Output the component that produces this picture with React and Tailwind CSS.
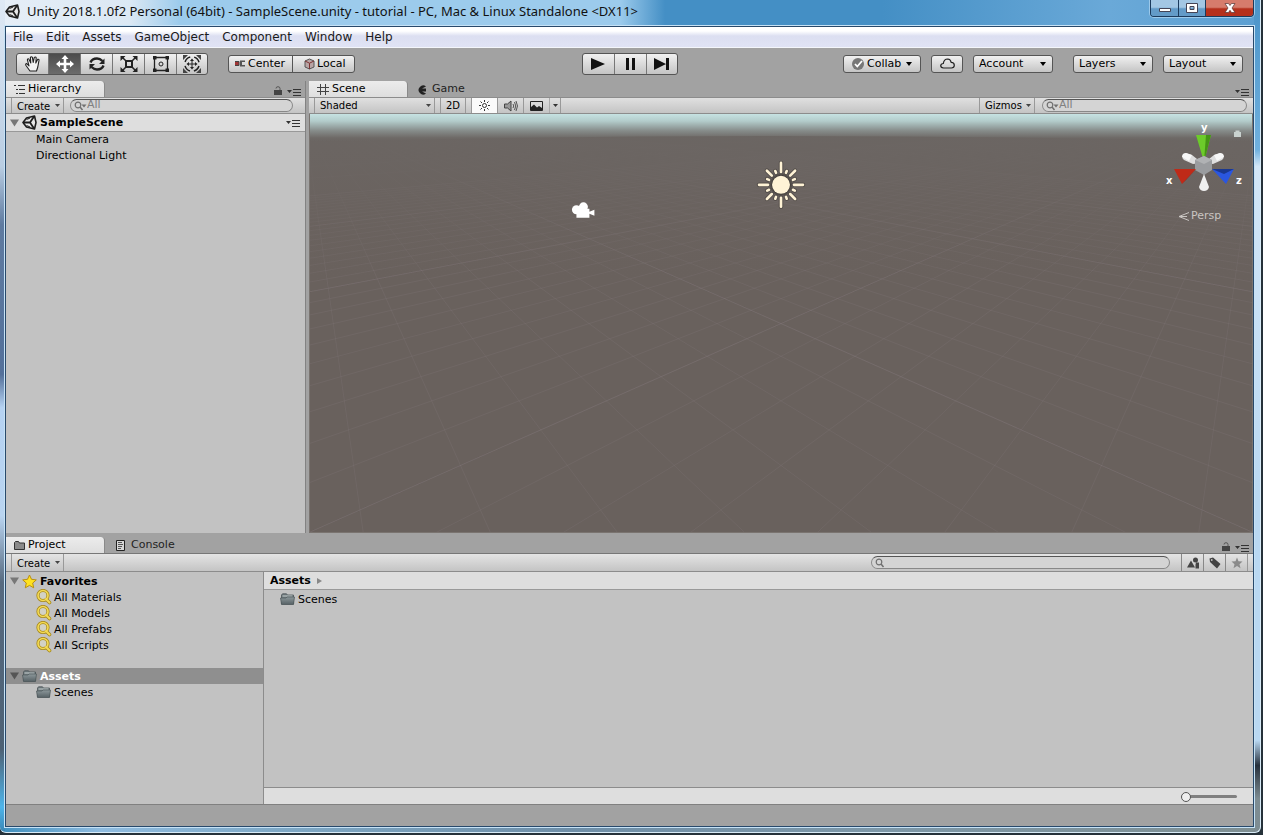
const VIEW_W = 944;
const VIEW_H = 420;
const HORIZON = -2;
const CX = 472;

// project a ground point, the axes run towards the two vanishing points
const project = (a, b) => {
  const w = 1 + 0.669 * (a + b);
  return [
    (CX + 0.669 * (a * (CX - 479) + b * (CX + 479))) / w,
    (210 + 0.669 * (a + b) * HORIZON) / w,
  ];
};

const gridLines = (step, from, to) => {
  const lines = [];
  for (let i = from; i <= to; i += 1) {
    const c = i * step;
    const near = -0.8 / 0.669 - c;
    const far = near + 12;
    lines.push([project(c, near), project(c, far)]);
    lines.push([project(near, c), project(far, c)]);
  }
  return lines;
};

const minorLines = gridLines(0.1, -40, 30);
const majorLines = gridLines(1, -4, 5);

const toPath = (lines) => lines.map(([p, q]) => `M${p[0].toFixed(1)} ${p[1].toFixed(1)}L${q[0].toFixed(1)} ${q[1].toFixed(1)}`).join('');

const Svg = ({ w, h, className = '', children }) => (
  <svg width={w} height={h} viewBox={`0 0 ${w} ${h}`} className={`shrink-0 ${className}`} aria-hidden="true">
    {children}
  </svg>
);

const UnityLogo = ({ className }) => (
  <Svg w={15} h={15} className={className}>
    <path d="M1 7.5 4.5 3 12.5 1 14 7.5 12.5 14 4.5 12Z" fill="#e8e8e8" stroke="#1d1d1d" strokeWidth="1.6" strokeLinejoin="round" />
    <path d="M1.5 7.5H8M8 7.5 12 1.5M8 7.5 12 13.5" stroke="#1d1d1d" strokeWidth="1.8" fill="none" />
    <path d="M4.5 4.5 8 3M4.5 10.5 8 12" stroke="#333" strokeWidth="1.2" />
  </Svg>
);

const Caret = ({ className = '' }) => (
  <Svg w={6} h={4} className={className}>
    <path d="M0 0H6L3 4Z" fill="currentColor" />
  </Svg>
);

const SmallCaret = ({ className = '' }) => (
  <Svg w={5} h={3} className={className}>
    <path d="M0 0H5L2.5 3Z" fill="currentColor" />
  </Svg>
);

const MenuIcon = () => (
  <Svg w={14} h={8} className="text-[#333]">
    <path d="M0 2H5L2.5 5ZM6 1H14V2H6ZM6 4H14V5H6ZM6 7H14V8H6Z" fill="currentColor" />
  </Svg>
);

const LockIcon = () => (
  <Svg w={8} h={9}>
    <path d="M0 4H8V9H0Z" fill="#444" />
    <path d="M2 2.5Q2 0.7 4 0.7T6 2.5V4" stroke="#555" fill="none" />
  </Svg>
);

const FoldArrow = ({ className = 'text-[#777]' }) => (
  <Svg w={9} h={8} className={className}>
    <path d="M0 0.5H9L4.5 7.5Z" fill="currentColor" />
  </Svg>
);

const FolderIcon = () => (
  <Svg w={15} h={13}>
    <defs>
      <linearGradient id="folder" x1="0" y1="0" x2="0" y2="1">
        <stop offset="0" stopColor="#8d989b" />
        <stop offset="1" stopColor="#566165" />
      </linearGradient>
    </defs>
    <path d="M1.500 2 2.5 0.8H6.5L7.5 2H13.5V11H1.5Z" fill="#6f7a7d" stroke="#4c5659" strokeWidth="0.8" />
    <path d="M2.5 3H12.5" stroke="#c5cccd" />
    <path d="M0.5 5H6L7 4H14.5L13.5 11.5H1.5Z" fill="url(#folder)" stroke="#4c5659" strokeWidth="0.7" />
  </Svg>
);

const SearchStar = () => (
  <Svg w={16} h={16}>
    <path d="M10 10 13.5 13.5" stroke="#a88a1c" strokeWidth="3.6" strokeLinecap="round" />
    <circle cx="7" cy="6.5" r="5" fill="#d3d2c4" stroke="#a88a1c" strokeWidth="3.2" />
    <circle cx="7" cy="6.5" r="5" fill="none" stroke="#f3da55" strokeWidth="1.6" />
    <path d="M10 10 13.5 13.5" stroke="#f3da55" strokeWidth="2" strokeLinecap="round" />
  </Svg>
);

const StarIcon = () => (
  <Svg w={15} h={15}>
    <path d="M7.500 1 9.5 5.3 14.3 5.9 10.7 9.1 11.7 13.8 7.5 11.4 3.3 13.8 4.3 9.1 0.7 5.9 5.5 5.3Z" fill="#ffe21f" stroke="#b98f10" />
  </Svg>
);

const Magnifier = ({ arrow }) => (
  <Svg w={arrow ? 13 : 10} h={10} className="text-[#707070]">
    <circle cx="4" cy="4" r="2.8" fill="none" stroke="currentColor" strokeWidth="1.2" />
    <path d="M6 6 8.5 9" stroke="currentColor" strokeWidth="1.5" />
    {arrow && <path d="M7.500 3.5H12.500L10 6.5Z" fill="currentColor" />}
  </Svg>
);

const tools = [
  {
    name: 'Hand',
    icon: (
      <path d="M6 16 1.8 10.2Q1.3 8.8 2.7 8.6L5 10.8 3.4 4.8Q3.5 3.4 4.8 3.9L6.8 8 6.4 2.6Q7.2 1 8.4 2.4L9.2 7.5 10.3 2.4Q11.5 1.3 12.2 2.8L11.8 8 13.6 4.4Q15.2 4 15 5.4L13.8 12 12.5 16Z" fill="#f4f4f4" stroke="#222" strokeWidth="1.1" strokeLinejoin="round" />
    ),
  },
  {
    name: 'Move',
    active: true,
    icon: <path d="M9 0 12.500 4H10.3V7.700H14V5.5L18 9 14 12.500V10.300H10.3V14H12.500L9 18 5.5 14H7.700V10.300H4V12.500L0 9 4 5.5V7.700H7.700V4H5.500Z" fill="#fff" />,
  },
  {
    name: 'Rotate',
    icon: (
      <>
        <path d="M2.500 7.500Q4 3.500 9 3.500 12 3.500 14.500 6M15.500 10.500Q14 14.500 9 14.500 6 14.500 3.500 12" fill="none" stroke="#222" strokeWidth="2.4" />
        <path d="M16.500 3.500V9H11ZM1.500 14.500V9H7Z" fill="#222" />
      </>
    ),
  },
  {
    name: 'Scale',
    icon: (
      <>
        <rect x="6" y="6" width="6" height="6" fill="none" stroke="#222" strokeWidth="2" />
        <path d="M5.5 5.5 2 2M12.5 5.5 16 2M5.5 12.5 2 16M12.5 12.5 16 16" stroke="#222" strokeWidth="1.5" />
        <path d="M0.500 1H5.500L0.500 6ZM17.500 1H12.500L17.500 6ZM0.500 17H5.500L0.500 12ZM17.500 17H12.500L17.500 12Z" fill="#222" />
      </>
    ),
  },
  {
    name: 'Rect',
    icon: (
      <>
        <path d="M2.500 2.500H15.500V15.500H2.500Z" fill="none" stroke="#222" strokeWidth="1.3" />
        <path d="M1 1H4.500V4.500H1ZM13.500 1H17V4.500H13.500ZM1 13.500H4.500V17H1ZM13.500 13.500H17V17H13.500Z" fill="#222" />
        <circle cx="9" cy="9" r="2" fill="none" stroke="#222" />
      </>
    ),
  },
  {
    name: 'Transform',
    icon: (
      <>
        <circle cx="9" cy="9" r="7.200" fill="none" stroke="#222" strokeWidth="1.5" strokeDasharray="7.300 4" strokeDashoffset="-2" />
        <path d="M0 0H5L0 5ZM18 0H13L18 5ZM0 18H5L0 13ZM18 18H13L18 13Z" fill="#444" />
        <path d="M9 5V13M5 9H13" stroke="#222" />
        <path d="M9 3.500 11 6H7ZM9 14.500 11 12H7ZM3.500 9 6 7V11ZM14.500 9 12 7V11Z" fill="#222" />
      </>
    ),
  },
];

const playback = [
  { name: 'Play', d: 'M2 2 16 8 2 14Z' },
  { name: 'Pause', d: 'M5 2H8V14H5ZM11 2H14V14H11Z' },
  { name: 'Step', d: 'M1 2 13 8 1 14ZM13 2H16V14H13Z' },
];

const raised = 'border border-[#555] bg-linear-to-b from-[#f1f1f1] to-[#c4c4c4]';

const Dropdown = ({ label, width }) => (
  <label className="relative flex items-center">
    <select aria-label={label} className={`h-[18px] ${width} ${raised} appearance-none rounded-[3px] pl-[5px] text-[11px] leading-4`}>
      <option>{label}</option>
    </select>
    <Caret className="pointer-events-none absolute right-[7px]" />
  </label>
);

const Tab = ({ icon, label, active }) => (
  <button
    type="button"
    className={`flex h-full items-center gap-[3px] pt-px pl-2 text-[11px] ${active ? 'w-[99px] rounded-tr-sm border-r border-[#8a8a8a] bg-linear-to-b from-[#ececec] to-[#dedede]' : 'px-2 text-[#222]'}`}
  >
    {icon}
    {label}
  </button>
);

const TabBar = ({ children, locked = true }) => (
  <div className="flex h-4 items-stretch bg-[#a2a2a2]">
    {children}
    <div className="ml-auto flex items-end gap-[5px] pr-1 pb-px">
      {locked && (
        <button type="button" aria-label="Lock" className="pb-px"><LockIcon /></button>
      )}
      <button type="button" aria-label="Panel menu"><MenuIcon /></button>
    </div>
  </div>
);

const SubBar = ({ children }) => (
  <div className="flex h-[17px] shrink-0 items-stretch border-y border-[#8c8c8c] bg-linear-to-b from-[#e0e0e0] to-[#c4c4c4] text-[10px]">
    {children}
  </div>
);

const CreateButton = () => (
  <button type="button" className="ml-[5px] flex w-[53px] items-center gap-[5px] border-x border-[#999] pt-px pl-[5px]">
    Create
    <SmallCaret className="mb-px text-[#444]" />
  </button>
);

const SearchBox = ({ className, arrow, placeholder, label }) => (
  <label className={`flex h-[13px] items-center self-center rounded-full border border-[#888] border-t-[#555] bg-[#d4d4d4] pl-[3px] ${className}`}>
    <Magnifier arrow={arrow} />
    <input aria-label={label} placeholder={placeholder} className="h-3 min-w-0 flex-1 bg-transparent pb-px text-[11px] leading-3 outline-none placeholder:text-[#808080]" />
  </label>
);

function TitleBar() {
  return (
    <header className="flex h-[26px] shrink-0 items-start justify-between">
      <h1 className="flex h-[23px] items-center gap-[7px] font-['Noto_Sans',sans-serif] text-[13px] text-[#111]">
        <UnityLogo />
        Unity 2018.1.0f2 Personal (64bit) - SampleScene.unity - tutorial - PC, Mac &amp; Linux Standalone &lt;DX11&gt;
      </h1>
      <div className="flex h-[17px] overflow-hidden rounded-b-[4px] border border-t-0 border-[#1b3a5c] shadow-[0_0_0_1px_#9cc9ea]">
        <button type="button" aria-label="Minimize" className="flex w-[28px] items-center justify-center border-r border-[#1b3a5c] bg-linear-to-b from-[#a3c7e4] from-45% to-[#639bc8] to-55%">
          <Svg w={12} h={12}><path d="M0.500 6.500H11.500V9.500H0.500Z" fill="#fff" stroke="#445" /></Svg>
        </button>
        <button type="button" aria-label="Maximize" className="flex w-[27px] items-center justify-center border-r border-[#1b3a5c] bg-linear-to-b from-[#a3c7e4] from-45% to-[#639bc8] to-55%">
          <Svg w={12} h={10}><path d="M0.500 0.500H11.500V9.500H0.500ZM4 3.500V6.500H8V3.500Z" fill="#fff" fillRule="evenodd" stroke="#445" /></Svg>
        </button>
        <button type="button" aria-label="Close" className="flex w-[47px] items-center justify-center bg-linear-to-b from-[#d67c6c] from-45% to-[#b5301c] to-55%">
          <Svg w={12} h={10}><path d="M1 0.500H4.500L6 2.500 7.500 0.500H11L8 5 11 9.500H7.500L6 7.300 4.500 9.500H1L4 5Z" fill="#fff" stroke="#533" strokeWidth="0.7" /></Svg>
        </button>
      </div>
    </header>
  );
}

function MenuBar() {
  return (
    <nav className="flex h-[21px] shrink-0 items-center gap-[13px] border-b border-[#f4f6fb] bg-linear-to-b from-white from-20% via-[#dcdff1] via-45% to-[#e0e3f5] pl-[7px] text-[12px] text-[#1a1a1a]">
      {['File', 'Edit', 'Assets', 'GameObject', 'Component', 'Window', 'Help'].map((item) => (
        <button key={item} type="button">{item}</button>
      ))}
    </nav>
  );
}

function Toolbar() {
  return (
    <div className="grid h-[33px] shrink-0 grid-cols-[1fr_auto_1fr] items-center bg-[#a2a2a2] px-[10px] pb-[2px] text-[11px]">
      <div className="flex items-center gap-5">
        <div className={`flex h-[22px] overflow-hidden rounded-[3px] ${raised}`}>
          {tools.map((tool) => (
            <button
              key={tool.name}
              type="button"
              aria-label={tool.name}
              className={`flex w-8 items-center justify-center border-r border-[#777] last:w-[30px] last:border-r-0 ${tool.active ? 'bg-linear-to-b from-[#4c4c4c] to-[#6c6c6c]' : ''}`}
            >
              <Svg w={18} h={18}>{tool.icon}</Svg>
            </button>
          ))}
        </div>
        <div className={`flex h-[18px] rounded-[3px] ${raised}`}>
          <button type="button" className="flex w-[64px] items-center gap-[3px] border-r border-[#555] pt-px pl-[6px]">
            <Svg w={10} h={8}>
              <path d="M0 1.500H4V5.500H0Z" fill="#a03434" />
              <path d="M0 1.500H4V5.500H0" fill="none" stroke="#444" />
              <path d="M5 0.500H10V2H7V5H10V6.500H5Z" fill="#555" />
            </Svg>
            Center
          </button>
          <button type="button" className="flex w-[61px] items-center gap-[2px] pt-px pl-[11px]">
            <Svg w={11} h={12}>
              <path d="M5.500 1 10 3V9L5.500 11 1 9V3Z" fill="#b9a5a5" stroke="#555" />
              <path d="M1 3 5.500 5.200 10 3M5.500 5.200V11" stroke="#7d3333" fill="none" />
            </Svg>
            Local
          </button>
        </div>
      </div>

      <div className={`flex h-[22px] rounded-[3px] ${raised}`}>
        {playback.map((p) => (
          <button key={p.name} type="button" aria-label={p.name} className="flex w-8 items-center justify-center border-r border-[#777] last:w-[30px] last:border-r-0">
            <Svg w={18} h={16}><path d={p.d} fill="#111" /></Svg>
          </button>
        ))}
      </div>

      <div className="flex items-center justify-end gap-[10px]">
        <button type="button" className={`flex h-[18px] w-[78px] items-center gap-[3px] rounded-[3px] pt-px pl-2 ${raised}`}>
          <Svg w={12} h={12}>
            <circle cx="6" cy="6" r="6" fill="#777" />
            <path d="M3 6 5.300 8.500 10 3" stroke="#fff" strokeWidth="1.8" fill="none" />
          </Svg>
          Collab
          <Caret className="ml-[2px]" />
        </button>
        <button type="button" aria-label="Services" className={`flex h-[18px] w-8 items-center justify-center rounded-[3px] ${raised}`}>
          <Svg w={15} h={11}>
            <path d="M3.500 10Q0.700 9.800 0.700 7.600 1 5.500 3.300 5.500 4 1 7.700 1 10.500 1.200 11.200 4.400 14.300 4.500 14.300 7.300 14.200 10 11.500 10Z" fill="none" stroke="#222" strokeWidth="1.2" />
          </Svg>
        </button>
        <Dropdown label="Account" width="w-20" />
        <div className="ml-[10px] flex gap-[10px]">
          <Dropdown label="Layers" width="w-20" />
          <Dropdown label="Layout" width="w-20" />
        </div>
      </div>
    </div>
  );
}

function Hierarchy() {
  return (
    <section className="flex w-[300px] shrink-0 flex-col border-r border-[#828282] bg-[#c2c2c2]">
      <TabBar>
        <Tab
          active
          label="Hierarchy"
          icon={<Svg w={11} h={9}><path d="M0 0.500H2M4 0.500H11M2 4.500H4M5 4.500H11M2 8.500H4M5 8.500H11" stroke="#333" /></Svg>}
        />
      </TabBar>
      <SubBar>
        <CreateButton />
        <SearchBox label="Search hierarchy" arrow placeholder="All" className="mr-3 ml-[6px] flex-1" />
      </SubBar>
      <div className="flex h-[18px] items-center border-b border-[#999] bg-[#dedede] pr-[5px] pl-1 text-[11px] font-bold">
        <FoldArrow />
        <UnityLogo className="mx-[3px]" />
        <span className="flex-1 pt-[2px]">SampleScene</span>
        <button type="button" aria-label="Scene menu"><MenuIcon /></button>
      </div>
      <ul className="pl-[30px] text-[11px] leading-4">
        <li>Main Camera</li>
        <li>Directional Light</li>
      </ul>
    </section>
  );
}

function OrientationGizmo() {
  return (
    <div className="absolute top-[6px] right-[10px] w-[80px] text-[#eee]">
      <svg width="80" height="82" viewBox="0 0 80 82" aria-hidden="true">
        <path d="M72 12H79V17H72ZM73.500 12V10.500H77.500V12" fill="#c9d2cf" />
        <path d="M31 44 22 40Q18 37 24 33L30 35 40 43ZM51 44 60 40Q64 37 58 33L52 35 42 43Z" fill="#dedede" />
        <path d="M20 37Q20 33 24 33L30 35 27 41ZM62 37Q62 33 58 33L52 35 55 41Z" fill="#f7f7f7" />
        <path d="M34 15H49L42 42Z" fill="#6ccb2a" />
        <path d="M44 15H49L42 42Z" fill="#459515" />
        <path d="M33 40 42 36 50 40V50L42 55 33 50Z" fill="#9a9c9f" />
        <path d="M33 40 42 36 50 40 42 44Z" fill="#b0b2b4" />
        <path d="M34 49 12 49 20 64Z" fill="#bf2a18" />
        <path d="M34 49 24 60 20 64Z" fill="#7b170c" />
        <path d="M50 49 72 49 64 64Z" fill="#2a56e0" />
        <path d="M50 49 72 49 62 54Z" fill="#1a378f" />
        <path d="M42 54 37 67Q38 71 42 71T47 67Z" fill="#efefef" />
        <g fill="#fff" fontFamily="DejaVu Sans, sans-serif" fontSize="10" fontWeight="bold">
          <text x="39" y="11">y</text>
          <text x="4" y="64">x</text>
          <text x="74" y="64">z</text>
        </g>
      </svg>
      <button type="button" className="ml-4 flex items-center gap-[2px] pt-[6px] text-[11px] text-[#c9c5c2]">
        <Svg w={11} h={9}><path d="M11 0.500 1 4.500 11 8.500M1 4.500H9" stroke="currentColor" fill="none" /></Svg>
        Persp
      </button>
    </div>
  );
}

function SunRays() {
  return Array.from({ length: 16 }, (_, i) => {
    const end = i % 4 === 0 ? 22 : i % 2 === 0 ? 20 : 15;
    return <path key={i} d={`M13 0H${end}`} transform={`rotate(${i * 22.5})`} />;
  });
}

function SceneViewport() {
  return (
    <div className="relative min-h-0 flex-1 overflow-hidden border border-t-0 border-[#7a7470] bg-[#69615d]">
      <svg className="absolute inset-0 h-full w-full" viewBox={`0 0 ${VIEW_W} ${VIEW_H}`} preserveAspectRatio="xMidYMin slice" role="img" aria-label="Scene view">
        <defs>
          <linearGradient id="sky" x1="0" y1="0" x2="0" y2="1">
            <stop offset="0" stopColor="#c6e2e2" />
            <stop offset="0.25" stopColor="#b3cccb" />
            <stop offset="0.6" stopColor="#868c8a" />
            <stop offset="0.85" stopColor="#6e6a67" />
            <stop offset="1" stopColor="#6b6663" stopOpacity="0" />
          </linearGradient>
          <linearGradient id="haze" x1="0" y1="0" x2="0" y2="1">
            <stop offset="0" stopColor="#6b6663" />
            <stop offset="0.12" stopColor="#6b6562" stopOpacity="0.9" />
            <stop offset="0.4" stopColor="#6a625e" stopOpacity="0" />
          </linearGradient>
        </defs>
        <path d={toPath(minorLines)} stroke="#8d8587" strokeOpacity="0.18" fill="none" />
        <path d={toPath(majorLines)} stroke="#8d8587" strokeOpacity="0.18" fill="none" />
        <rect width={VIEW_W} height={VIEW_H} fill="url(#haze)" />
        <path d="M0 0H944V28Q472 16 0 28Z" fill="url(#sky)" />

        <g fill="#fff" transform="translate(262 88)">
          <circle cx="5" cy="8" r="4.5" />
          <circle cx="12" cy="5" r="4.5" />
          <path d="M5 7H18V10L23 8V14L18 12V16H5Z" />
        </g>

        <g transform="translate(472 71)" stroke="#4a4440" strokeOpacity="0.7" strokeWidth="4.5" strokeLinecap="round">
          <SunRays />
          <circle r="9.5" strokeWidth="3" />
        </g>
        <g transform="translate(472 71)" stroke="#fff3d6" strokeWidth="2.6" strokeLinecap="round">
          <SunRays />
          <circle r="9" fill="#fff3d6" stroke="none" />
        </g>
      </svg>
      <OrientationGizmo />
    </div>
  );
}

function Scene() {
  return (
    <section className="flex min-w-0 flex-1 flex-col">
      <TabBar locked={false}>
        <Tab
          active
          label="Scene"
          icon={<Svg w={12} h={11}><path d="M3.500 0V11M8.500 0V11M0 3.500H12M0 7.500H12" stroke="#444" /></Svg>}
        />
        <Tab label="Game" icon={<Svg w={13} h={10}><path d="M10 1.500A4.500 4.500 0 1 0 10 8.500L6 6.500H10V3.500H6Z" fill="#222" /></Svg>} />
      </TabBar>
      <SubBar>
        <div className="relative ml-[5px] flex items-center border-x border-[#999]">
          <select aria-label="Draw mode" className="h-full w-[119px] appearance-none bg-transparent pl-[5px] text-[10px] leading-3">
            <option>Shaded</option>
          </select>
          <SmallCaret className="pointer-events-none absolute right-[3px] text-[#444]" />
        </div>
        <button type="button" className="mx-[5px] w-[26px] border-x border-[#999]">2D</button>
        <button type="button" aria-label="Lighting" className="flex w-[27px] items-center justify-center border-x border-[#999] bg-[#fafafa]">
          <Svg w={13} h={13}>
            <circle cx="6.5" cy="6.5" r="2" fill="none" stroke="#333" />
            <path d="M6.500 1V3M6.500 10V12M1 6.500H3M10 6.500H12M2.500 2.500 4 4M9 9 10.500 10.500M10.500 2.500 9 4M4 9 2.500 10.500" stroke="#333" />
          </Svg>
        </button>
        <button type="button" aria-label="Audio" className="flex w-[26px] items-center justify-center border-r border-[#999]">
          <Svg w={14} h={12}>
            <path d="M0.500 4H3.500L7 1V11L3.500 8H0.500Z" fill="#999" stroke="#444" />
            <path d="M9 4Q10.500 6 9 8M10.500 2Q13 6 10.500 10M12 1Q15 6 12 11" fill="none" stroke="#555" />
          </Svg>
        </button>
        <button type="button" aria-label="Effects" className="flex w-[26px] items-center justify-center border-r border-[#aaa]">
          <Svg w={13} h={10}>
            <path d="M0.500 0.500H12.500V9.500H0.500Z" fill="#d8d8d8" stroke="#222" />
            <path d="M1 9V6L4 3.500 7 6.500 9 5 12 7V9Z" fill="#222" />
          </Svg>
        </button>
        <button type="button" aria-label="Effects menu" className="flex w-[11px] items-center justify-center border-r border-[#999]">
          <SmallCaret className="text-[#333]" />
        </button>
        <button type="button" className="ml-auto flex w-[56px] items-center gap-1 border-x border-[#999] pl-[5px]">
          Gizmos
          <SmallCaret className="text-[#444]" />
        </button>
        <SearchBox label="Search scene" arrow placeholder="All" className="mr-[6px] ml-[7px] w-[205px]" />
      </SubBar>
      <SceneViewport />
    </section>
  );
}

const filters = [
  { name: 'Search by type', d: 'M4 3.500 8 10.500H0ZM9 5.500H12V11.500H8.500V7.500ZM6 3A2.500 2.500 0 1 1 11 3 2.500 2.500 0 1 1 6 3Z', fill: '#444' },
  { name: 'Search by label', d: 'M0.500 1.500 4 0.500 11.500 7 8 11.500 1 5ZM2 2.200V3.700H3.500V2.200Z', fill: '#444' },
  { name: 'Save search', d: 'M6 0.500 7.500 4.200 11.500 4.500 8.500 7.200 9.500 11.200 6 9 2.500 11.200 3.500 7.200 0.500 4.500 4.500 4.200Z', fill: '#8a8a8a' },
];

function Project() {
  return (
    <section className="flex h-[267px] shrink-0 flex-col bg-[#c2c2c2]">
      <TabBar>
        <Tab
          active
          label="Project"
          icon={<Svg w={11} h={9}><path d="M0.500 1.500 1.500 0.500H4.500L5.500 2H10.500V8.500H0.500Z" fill="#8a8a8a" stroke="#333" /></Svg>}
        />
        <Tab
          label="Console"
          icon={<Svg w={13} h={11} className="ml-[2px]"><path d="M1.500 0.500H9.500V10.500H1.500Z" fill="#d8d8d8" stroke="#222" /><path d="M3 2.500H7M3 4.500H8M3 6.500H7M3 8.500H6" stroke="#555" /></Svg>}
        />
      </TabBar>
      <div className="flex h-[19px] shrink-0 items-stretch border-y border-[#8c8c8c] border-t-[#777] bg-linear-to-b from-[#e4e4e4] to-[#c4c4c4] text-[10px]">
        <CreateButton />
        <SearchBox label="Search project" className="mr-[11px] ml-auto w-[299px]" />
        <div className="mr-[5px] flex border-r border-[#999]">
          {filters.map((f) => (
            <button key={f.name} type="button" aria-label={f.name} className="flex w-[22px] items-center justify-center border-l border-[#888]">
              <Svg w={12} h={12}><path d={f.d} fill={f.fill} fillRule="evenodd" /></Svg>
            </button>
          ))}
        </div>
      </div>
      <div className="flex min-h-0 flex-1 text-[11px] leading-4">
        <div className="w-[258px] shrink-0 border-r border-[#8c8c8c] pt-px">
          <div className="flex h-4 items-center pl-1 font-bold">
            <FoldArrow />
            <span className="mx-[3px]"><StarIcon /></span>
            <span className="pt-[2px]">Favorites</span>
          </div>
          <ul className="mb-[15px]">
            {['All Materials', 'All Models', 'All Prefabs', 'All Scripts'].map((item) => (
              <li key={item} className="flex h-4 items-center gap-[2px] pl-[30px]">
                <SearchStar />
                <span className="pt-[2px]">{item}</span>
              </li>
            ))}
          </ul>
          <div className="flex h-4 items-center bg-[#8f8f8f] pl-1 font-bold text-white">
            <FoldArrow className="text-[#555]" />
            <span className="mx-[3px]"><FolderIcon /></span>
            <span className="pt-[2px]">Assets</span>
          </div>
          <div className="flex h-4 items-center gap-[3px] pl-[30px]">
            <FolderIcon />
            <span className="pt-[2px]">Scenes</span>
          </div>
        </div>
        <div className="flex min-w-0 flex-1 flex-col">
          <div className="flex h-[18px] items-center gap-[6px] border-b border-[#999] bg-[#dedede] pt-px pl-[6px] font-bold">
            Assets
            <Svg w={5} h={6}><path d="M0 0 5 3 0 6Z" fill="#888" /></Svg>
          </div>
          <div className="flex items-center gap-[3px] pl-4">
            <FolderIcon />
            <span className="pt-[2px]">Scenes</span>
          </div>
          <div className="mt-auto flex h-[17px] items-center justify-end border-t border-[#8c8c8c] bg-[#dedede] pr-4">
            <input
              type="range"
              aria-label="Icon size"
              defaultValue="0"
              className="h-[10px] w-14 appearance-none bg-transparent [&::-webkit-slider-runnable-track]:h-[3px] [&::-webkit-slider-runnable-track]:rounded-full [&::-webkit-slider-runnable-track]:bg-[#808080] [&::-webkit-slider-thumb]:-mt-[3px] [&::-webkit-slider-thumb]:h-[10px] [&::-webkit-slider-thumb]:w-[10px] [&::-webkit-slider-thumb]:appearance-none [&::-webkit-slider-thumb]:rounded-full [&::-webkit-slider-thumb]:border [&::-webkit-slider-thumb]:border-[#555] [&::-webkit-slider-thumb]:bg-[#eee]"
            />
          </div>
        </div>
      </div>
    </section>
  );
}

// translucent window frame: left edge, right edge, title glow, title bar, bottom edge
const glass = '[background:linear-gradient(#dfe9f5_0%,#b9cde2_20%,#5f7ba0_27%,#53709a_45%,#b5d2f2_49%,#b9d4f0_62%,#566a80_70%,#4d6174_90%,#4db4ea_97%,#3a86b4_100%)_left/5px_100%_no-repeat,linear-gradient(#4a93c8_0%,#6fb0de_18%,#d2e6f7_20%,#b9d8f2_60%,#b9d8f2_89%,#26303c_92%,#7d8c92_96%)_right/6px_100%_no-repeat,linear-gradient(to_right,#e6eef7_0,#dbe8f4_130px,#9ccbec_180px,#9ccbec_620px,#448fc5_665px,transparent_680px)_top/100%_26px_no-repeat,linear-gradient(to_right,#448fc5_70%,#6aa9d8_88%,#5b9fd2)_top/100%_26px_no-repeat,linear-gradient(to_right,#3f8fbd,#8fbce0_8%,#7fa9c6_22%,#6f8fa8_45%,#7e98a8_70%,#7f8f92)]';

export default function App() {
  return (
    <div className="flex h-screen min-h-[600px] flex-col bg-[#26323a] font-['DejaVu_Sans',sans-serif] text-black">
      <div className={`mr-[2px] mb-[2px] flex min-h-0 flex-1 flex-col overflow-hidden rounded-b-[6px] border-r border-b border-[#d9ecf8] pr-[6px] pb-[5px] pl-[5px] ${glass}`}>
        <TitleBar />
        <div className="flex min-h-0 flex-1 flex-col border border-[#28496b] shadow-[0_0_0_1px_#c6e2f6]">
          <MenuBar />
          <Toolbar />
          <main className="flex min-h-0 flex-1 flex-col bg-[#a2a2a2]">
            <div className="flex min-h-0 flex-1 gap-[3px] pb-1">
              <Hierarchy />
              <Scene />
            </div>
            <Project />
          </main>
          <footer className="h-[22px] shrink-0 border-t border-[#808080] bg-[#a2a2a2]" />
        </div>
      </div>
    </div>
  );
}
